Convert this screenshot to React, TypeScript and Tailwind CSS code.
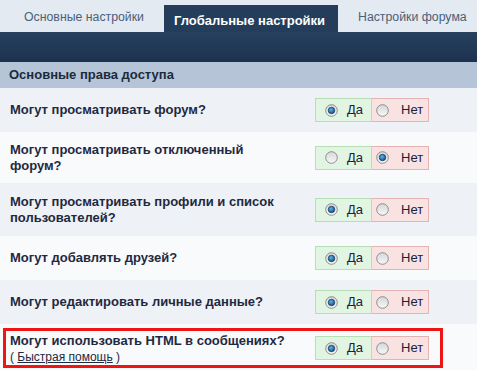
import React from 'react';

type Row = {
  label: React.ReactNode;
  yes: boolean;
  h: string;
  bg: string;
};

function Radio({ checked }: { checked: boolean }) {
  return (
    <svg width="13" height="13" viewBox="0 0 13 13" className="shrink-0">
      <defs>
        <linearGradient id="rg" x1="0" y1="0" x2="0" y2="1">
          <stop offset="0" stopColor="#d6d6d6" />
          <stop offset="1" stopColor="#f8f8f8" />
        </linearGradient>
        <radialGradient id="dot" cx="0.4" cy="0.35" r="0.7">
          <stop offset="0" stopColor="#5fb4ea" />
          <stop offset="1" stopColor="#0d4f86" />
        </radialGradient>
      </defs>
      <circle cx="6.5" cy="6.5" r="5.8" fill="url(#rg)" stroke="#8d8d8d" strokeWidth="1" />
      {checked && <circle cx="6.5" cy="6.5" r="3.2" fill="url(#dot)" stroke="#123a5e" strokeWidth="0.8" />}
    </svg>
  );
}

function YesNo({ yes }: { yes: boolean }) {
  return (
    <div className="flex h-[24px] text-[13px] text-[#1b2238]">
      <div className="flex w-[57px] items-center border border-[#b5dfb5] bg-[#e2f5e2] pl-[9px]">
        <Radio checked={yes} />
        <span className="ml-[9px]">Да</span>
      </div>
      <div className="flex w-[57px] items-center border border-l-0 border-[#e6b3b3] bg-[#f8e2e2] pl-[4px]">
        <Radio checked={!yes} />
        <span className="ml-[12px]">Нет</span>
      </div>
    </div>
  );
}

const rows: Row[] = [
  { label: 'Могут просматривать форум?', yes: true, h: 'h-[44px]', bg: 'bg-[#eef2f6]' },
  { label: <>Могут просматривать отключенный<br />форум?</>, yes: false, h: 'h-[51px]', bg: 'bg-[#f9fafc]' },
  { label: <>Могут просматривать профили и список<br />пользователей?</>, yes: true, h: 'h-[53px]', bg: 'bg-[#eef2f6]' },
  { label: 'Могут добавлять друзей?', yes: true, h: 'h-[44px]', bg: 'bg-[#f9fafc]' },
  { label: 'Могут редактировать личные данные?', yes: true, h: 'h-[44px]', bg: 'bg-[#eef2f6]' },
];

export default function App() {
  return (
    <div className="h-[370px] w-[477px] overflow-hidden bg-[#f9fafc] font-['Liberation_Sans',Arial,sans-serif]">
      {/* tabs */}
      <div className="flex h-[32px] items-end whitespace-nowrap bg-[#e3eaf2] pl-[14px] leading-[16px]">
        <div className="h-[27px] w-[139px] shrink-0 pl-[10px] pt-[4px] text-[12.3px] text-[#4b5f79]">Основные настройки</div>
        <div className="ml-[11px] h-[27px] w-[174px] shrink-0 bg-[#243d5b] pl-[10px] pt-[8px] text-[13px] font-bold text-white">Глобальные настройки</div>
        <div className="ml-[10px] h-[27px] shrink-0 pl-[10px] pt-[4px] text-[12.3px] text-[#4b5f79]">Настройки форума</div>
      </div>

      {/* dark bar */}
      <div className="h-[30px] bg-gradient-to-b from-[#26415f] to-[#1d324f]" />

      {/* section header */}
      <div className="flex h-[26px] items-center bg-[#b5c5d7] pl-[9px] text-[13px] font-bold text-[#1c2a3c]">
        Основные права доступа
      </div>

      {rows.map((r, i) => (
        <div key={i} className={`flex items-center ${r.h} ${r.bg}`}>
          <div className="w-[315px] whitespace-nowrap pl-[10px] text-[13px] leading-[16px] font-bold text-[#1f2940]">
            {r.label}
          </div>
          <YesNo yes={r.yes} />
        </div>
      ))}

      {/* highlighted row */}
      <div className="pt-[4px]">
        <div className="ml-[3px] flex h-[40px] w-[440px] items-center border-[3px] border-[#ee1515] bg-[#f9fafc]">
          <div className="w-[309px] whitespace-nowrap pl-[4px] pt-[1px] leading-[16px] text-[#1f2940]">
            <div className="text-[13px] font-bold">Могут использовать HTML в сообщениях?</div>
            <div className="text-[12px]">
              ( <span className="underline">Быстрая помощь</span> )
            </div>
          </div>
          <YesNo yes={true} />
        </div>
      </div>
    </div>
  );
}
